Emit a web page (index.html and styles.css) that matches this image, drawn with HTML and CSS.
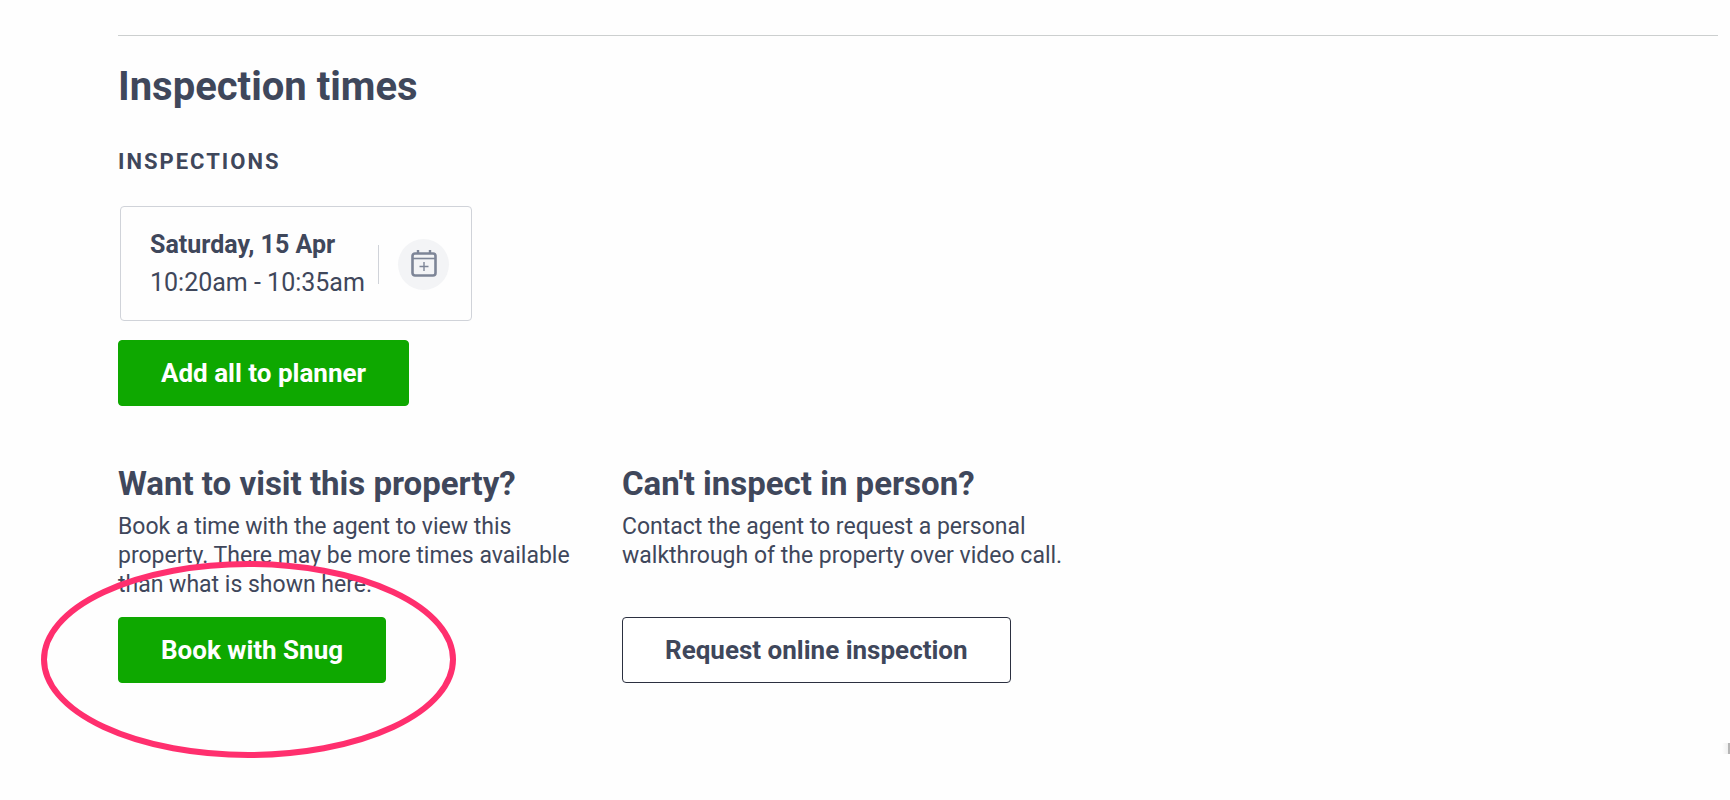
FILE: index.html
```
<!DOCTYPE html>
<html lang="en">
<head>
    <meta charset="UTF-8">
    <meta name="viewport" content="width=device-width, initial-scale=1.0">
    <title>Inspection times</title>
    <link rel="stylesheet" href="styles.css">
</head>
<body>
    <main class="inspections">
        <h1>Inspection times</h1>
        <h2 class="label">INSPECTIONS</h2>

        <div class="card">
            <div class="card-time">
                <strong>Saturday, 15 Apr</strong>
                <span>10:20am - 10:35am</span>
            </div>
            <button class="calendar-button" type="button" aria-label="Add to calendar">
                <svg width="26" height="28" viewBox="0 0 26 28" fill="none" stroke="#7d8597">
                    <rect x="1.5" y="3.5" width="23" height="22" rx="2.5" stroke-width="2.6"/>
                    <path d="M2 8.5H24" stroke-width="1.6"/>
                    <path d="M7 0V4M19 0V4" stroke-width="2.4"/>
                    <path d="M13 12V21M8.500 16.500H17.500" stroke-width="1.4"/>
                </svg>
            </button>
        </div>

        <button class="btn btn-green" type="button">Add all to planner</button>

        <div class="options">
            <section class="option">
                <h3>Want to visit this property?</h3>
                <p>Book a time with the agent to view this property. There may be more times available than what is shown here.</p>
                <button class="btn btn-green" type="button">Book with Snug</button>
                <svg class="highlight" width="415" height="197" viewBox="0 0 415 197" fill="none">
                    <ellipse cx="207.5" cy="98.5" rx="204.5" ry="95.5" stroke="#ff2f6e" stroke-width="6"/>
                </svg>
            </section>
            <section class="option">
                <h3>Can't inspect in person?</h3>
                <p>Contact the agent to request a personal walkthrough of the property over video call.</p>
                <button class="btn btn-outline" type="button">Request online inspection</button>
            </section>
        </div>
    </main>
    <div class="edge-tab"></div>
</body>
</html>
```

FILE: styles.css
```
* {
    margin: 0;
    padding: 0;
    box-sizing: border-box;
}

body {
    position: relative;
    min-height: 100vh;
    padding: 35px 12px 0 118px;
    background: #fefefe;
    color: #3f475b;
    font-family: Roboto, "Liberation Sans", sans-serif;
}

.inspections {
    border-top: 1px solid #cccfcf;
    padding-top: 27px;
}

h1 {
    font-size: 40px;
    line-height: 48px;
    font-weight: 700;
}

.label {
    margin-top: 36px;
    font-size: 22px;
    line-height: 30px;
    font-weight: 700;
    letter-spacing: 2px;
}

.card {
    display: flex;
    align-items: center;
    justify-content: space-between;
    width: 352px;
    margin: 29px 0 19px 2px;
    padding: 19px 22px 18px 29px;
    border: 1px solid #d0d3d9;
    border-radius: 4px;
}

.card-time {
    display: flex;
    flex-direction: column;
    font-size: 25px;
    line-height: 38px;
    white-space: nowrap;
}

.calendar-button {
    position: relative;
    display: flex;
    align-items: center;
    justify-content: center;
    width: 51px;
    height: 51px;
    border: none;
    border-radius: 50%;
    background: #f3f4f6;
    cursor: pointer;
}

/* divider between the time and the button */
.calendar-button::before {
    content: '';
    position: absolute;
    left: -20px;
    top: 6px;
    width: 1px;
    height: 39px;
    background: #d0d3d9;
}

.btn {
    height: 66px;
    padding: 0 42px;
    border: 1px solid transparent;
    border-radius: 4px;
    font-family: inherit;
    font-size: 26px;
    line-height: 32px;
    font-weight: 700;
    cursor: pointer;
}

.btn-green {
    background: #0ea800;
    border-color: #0ea800;
    color: #fff;
}

.btn-outline {
    background: #fff;
    border-color: #2b3040;
    color: #3f475b;
}

.options {
    display: grid;
    grid-template-columns: repeat(2, minmax(0, 464px));
    gap: 40px;
    margin-top: 58px;
}

.option {
    position: relative;
    display: flex;
    flex-direction: column;
    align-items: flex-start;
}

.option h3 {
    margin-bottom: 8px;
    font-size: 33px;
    line-height: 40px;
    font-weight: 700;
}

.option p {
    margin-bottom: 18px;
    font-size: 23px;
    line-height: 29px;
}

.option .btn {
    margin-top: auto;
}

.highlight {
    position: absolute;
    left: -77px;
    bottom: -75px;
    pointer-events: none;
}

.edge-tab {
    position: absolute;
    right: 0;
    top: 743px;
    width: 8px;
    height: 11px;
    border-right: 2px solid #b5b5b5;
    background: linear-gradient(to right, #fefefe, #f0f0f0);
}
```
